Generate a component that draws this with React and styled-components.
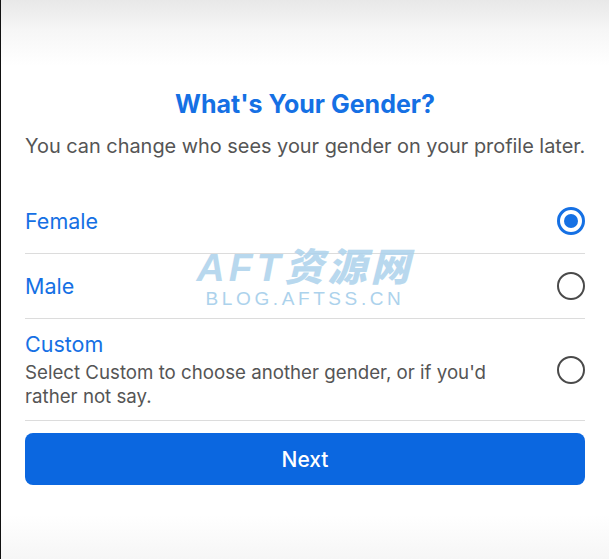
import React, { useState } from 'react';
import styled, { createGlobalStyle } from 'styled-components';

const GlobalStyle = createGlobalStyle`
  html, body {
    margin: 0;
    padding: 0;
    background: #ffffff;
  }
  * {
    box-sizing: border-box;
  }
`;

const Screen = styled.div`
  position: relative;
  width: 609px;
  height: 559px;
  overflow: hidden;
  border-left: 1px solid #111;
  background: linear-gradient(
    180deg,
    #e8e8e8 0px,
    #f6f6f6 30px,
    #ffffff 66px,
    #ffffff 515px,
    #f6f6f6 559px
  );
  font-family: Inter, "Liberation Sans", Arial, sans-serif;
  padding: 88px 24px 0 24px;
`;

const Title = styled.h1`
  margin: 0;
  text-align: center;
  color: #1570e4;
  font-size: 25px;
  line-height: 32px;
  font-weight: 700;
`;

const Subtitle = styled.p`
  margin: 14px 0 0;
  text-align: center;
  color: #555;
  font-size: 19.9px;
  line-height: 24px;
  font-weight: 400;
  white-space: nowrap;
`;

const Options = styled.div`
  margin-top: 31px;
  display: flex;
  flex-direction: column;
`;

const OptionRow = styled.label`
  display: flex;
  align-items: center;
  justify-content: space-between;
  gap: 20px;
  min-height: ${p => p.$tall ? '102px' : '65px'};
  border-bottom: 1px solid #dcdcdc;
  cursor: pointer;
`;

const OptionText = styled.div`
  display: flex;
  flex-direction: column;
  gap: 4px;
`;

const OptionLabel = styled.span`
  color: #1570e4;
  font-size: 21.5px;
  line-height: 26px;
`;

const OptionHint = styled.span`
  color: #555;
  font-size: 18.7px;
  line-height: 24px;
  max-width: 490px;
`;

const Radio = styled.span`
  flex: none;
  width: 28px;
  height: 28px;
  border-radius: 50%;
  border: ${p => p.$checked ? '3px solid #1570e4' : '2.5px solid #4a4a4a'};
  display: flex;
  align-items: center;
  justify-content: center;

  &::after {
    content: '';
    width: 14px;
    height: 14px;
    border-radius: 50%;
    background: ${p => p.$checked ? '#1570e4' : 'transparent'};
  }
`;

const NextButton = styled.button`
  margin-top: 12px;
  width: 100%;
  height: 52px;
  border: none;
  border-radius: 8px;
  background: #0b67e0;
  color: #fff;
  font-family: inherit;
  font-size: 21px;
  font-weight: 500;
  cursor: pointer;
`;

const Watermark = styled.div`
  position: absolute;
  left: 0;
  right: 0;
  top: 248px;
  display: flex;
  flex-direction: column;
  align-items: center;
  pointer-events: none;
  color: #acd2ec;
`;

const WatermarkBrand = styled.span`
  font-family: "Liberation Sans", "Noto Sans CJK SC", sans-serif;
  font-size: 39px;
  line-height: 39px;
  font-weight: 900;
  font-style: italic;
  letter-spacing: 4px;
  opacity: 0.85;
`;

const WatermarkUrl = styled.span`
  font-family: "Liberation Sans", sans-serif;
  font-size: 19px;
  line-height: 22px;
  letter-spacing: 3.6px;
  margin-top: 1px;
`;

const OPTIONS = [
  { key: 'female', label: 'Female' },
  { key: 'male', label: 'Male' },
  { key: 'custom', label: 'Custom', hint: "Select Custom to choose another gender, or if you'd rather not say." },
];

export default function App() {
  const [gender, setGender] = useState('female');

  return (
    <>
      <GlobalStyle />
      <Screen>
        <Title>What's Your Gender?</Title>
        <Subtitle>You can change who sees your gender on your profile later.</Subtitle>
        <Options>
          {OPTIONS.map(opt => (
            <OptionRow key={opt.key} $tall={!!opt.hint} onClick={() => setGender(opt.key)}>
              <OptionText>
                <OptionLabel>{opt.label}</OptionLabel>
                {opt.hint && <OptionHint>{opt.hint}</OptionHint>}
              </OptionText>
              <Radio $checked={gender === opt.key} />
            </OptionRow>
          ))}
        </Options>
        <NextButton>Next</NextButton>
        <Watermark>
          <WatermarkBrand>AFT资源网</WatermarkBrand>
          <WatermarkUrl>BLOG.AFTSS.CN</WatermarkUrl>
        </Watermark>
      </Screen>
    </>
  );
}
